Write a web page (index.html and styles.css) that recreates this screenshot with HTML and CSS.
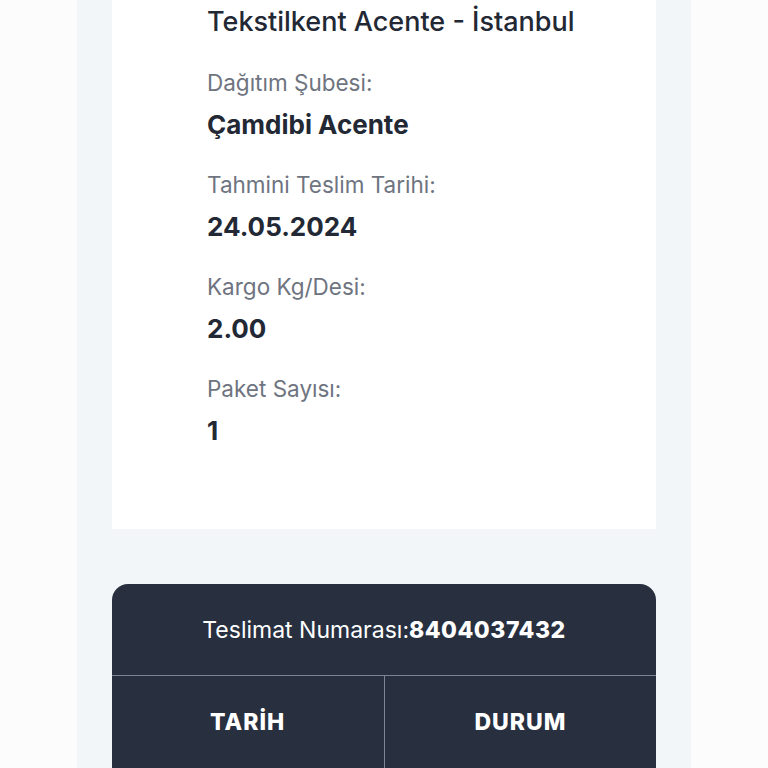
FILE: index.html
```html
<!DOCTYPE html>
<html lang="tr">
<head>
<meta charset="utf-8">
<title>Kargo Takip</title>
<link rel="stylesheet" href="styles.css">
</head>
<body>
<div class="panel">
  <section class="card">
    <h2 class="heading">Tekstilkent Acente - İstanbul</h2>
    <div class="field">
      <div class="label">Dağıtım Şubesi:</div>
      <div class="value">Çamdibi Acente</div>
    </div>
    <div class="field">
      <div class="label">Tahmini Teslim Tarihi:</div>
      <div class="value">24.05.2024</div>
    </div>
    <div class="field">
      <div class="label">Kargo Kg/Desi:</div>
      <div class="value">2.00</div>
    </div>
    <div class="field">
      <div class="label">Paket Sayısı:</div>
      <div class="value">1</div>
    </div>
  </section>
  <section class="track">
    <div class="track-head">Teslimat Numarası:<b>8404037432</b></div>
    <div class="track-cols">
      <div class="col">TARİH</div>
      <div class="col">DURUM</div>
    </div>
  </section>
</div>
</body>
</html>
```
FILE: styles.css
```css
html, body {
  margin: 0;
  padding: 0;
  background: #fcfcfd;
  font-family: "Inter", "Noto Sans", sans-serif;
}
.panel {
  margin-left: 77px;
  width: 544px;
  padding: 0 35px;
  height: 768px;
  background: #f3f6f9;
  overflow: hidden;
}
.card {
  background: #ffffff;
  padding: 0 20px 83px 95px;
}
.heading {
  margin: 0 0 24px;
  font-size: 27px;
  line-height: 44px;
  font-weight: 500;
  color: #222834;
}
.field {
  margin-bottom: 30px;
}
.field:last-child {
  margin-bottom: 0;
}
.label {
  font-size: 22.5px;
  line-height: 30px;
  color: #6e7480;
  font-weight: 400;
  margin-bottom: 12px;
}
.value {
  font-size: 26px;
  line-height: 30px;
  font-weight: 700;
  color: #222834;
}
.track {
  margin-top: 55px;
  background: #283040;
  border-radius: 16px 16px 0 0;
  color: #ffffff;
}
.track-head {
  height: 91px;
  display: flex;
  align-items: center;
  justify-content: center;
  font-size: 23px;
  font-weight: 400;
  border-bottom: 1.5px solid #7d8696;
}
.track-head b {
  font-weight: 800;
  letter-spacing: 0.5px;
}
.track-cols {
  display: grid;
  grid-template-columns: 1fr 1fr;
  height: 120px;
}
.col {
  display: flex;
  justify-content: center;
  padding-top: 32px;
  font-size: 23px;
  line-height: 28px;
  font-weight: 800;
  letter-spacing: 1px;
}
.col + .col {
  border-left: 1.5px solid #7d8696;
}
.col:first-child {
  justify-content: flex-start;
  padding-left: 98px;
}
```
